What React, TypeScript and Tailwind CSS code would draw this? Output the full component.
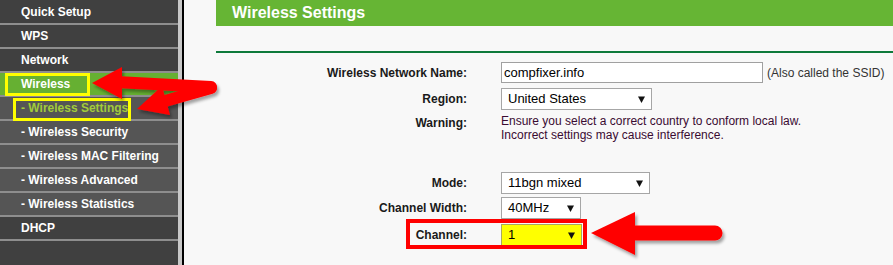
import React from "react";

type MenuItem = { label: string; sub?: boolean; active?: boolean };

const menu: MenuItem[] = [
  { label: "Quick Setup" },
  { label: "WPS" },
  { label: "Network" },
  { label: "Wireless", active: true },
  { label: "- Wireless Settings", sub: true, active: true },
  { label: "- Wireless Security", sub: true },
  { label: "- Wireless MAC Filtering", sub: true },
  { label: "- Wireless Advanced", sub: true },
  { label: "- Wireless Statistics", sub: true },
  { label: "DHCP" },
];

function Triangle() {
  return (
    <svg width="7" height="7" viewBox="0 0 7 7" className="shrink-0">
      <polygon points="0,0.5 7,0.5 3.5,7" fill="#111" />
    </svg>
  );
}

function Select({ value, width, yellow }: { value: string; width: string; yellow?: boolean }) {
  return (
    <div
      className={`flex h-[22px] items-center justify-between border pl-[6px] pr-[6px] text-[13px] text-black ${width} ${
        yellow ? "border-[#a8a860] bg-[#ffff00]" : "border-[#a6a6a6] bg-white"
      }`}
    >
      <span>{value}</span>
      <Triangle />
    </div>
  );
}

function Label({ children }: { children: React.ReactNode }) {
  return <div className="text-right text-[12px] font-bold text-[#1a1a1a]">{children}</div>;
}

export default function App() {
  return (
    <div
      className="relative flex h-[265px] w-[893px] overflow-hidden bg-[#f8f8f8]"
      style={{ fontFamily: '"Liberation Sans", Arial, sans-serif' }}
    >
      {/* sidebar */}
      <div className="flex w-[178px] shrink-0 flex-col bg-[#404040] pt-px">
        {menu.map((m) => (
          <div
            key={m.label}
            className={`h-[24px] border-b-2 border-[#8e8e8e] pl-[21px] text-[12px] font-bold leading-[23px] ${
              m.active && !m.sub ? "bg-[#66b032]" : m.sub ? "bg-[#555555]" : "bg-[#404040]"
            } ${m.active && m.sub ? "text-[#a2cc3a]" : "text-white"}`}
          >
            {m.label}
          </div>
        ))}
      </div>
      <div className="w-[4px] shrink-0 bg-[#c8c8c8]" />
      <div className="w-[2px] shrink-0 bg-black" />

      {/* main */}
      <div className="flex flex-1 flex-col pl-[32px]">
        <div className="flex h-[26px] items-center bg-[#66b534] pl-[16px] text-[16px] font-bold text-white">
          Wireless Settings
        </div>
        <div className="mt-[25px] h-[2px] bg-[#0e7a3b]" />

        <div className="grid grid-cols-[251px_1fr] items-center gap-x-[34px]">
          <div className="col-span-2 h-[9px]" />
          <Label>Wireless Network Name:</Label>
          <div className="flex items-center">
            <div className="flex h-[21px] w-[262px] items-center border border-[#a0a0a0] bg-white pl-[2px] text-[13px] text-black">
              compfixer.info
            </div>
            <span className="ml-[4px] text-[12px] text-[#333]">(Also called the SSID)</span>
          </div>

          <div className="col-span-2 h-[5px]" />
          <Label>Region:</Label>
          <Select value="United States" width="w-[151px]" />

          <div className="col-span-2 h-[4px]" />
          <div className="self-start">
            <Label>Warning:</Label>
          </div>
          <div className="text-[12px] leading-[14px] text-[#3a0b32]">
            Ensure you select a correct country to conform local law.
            <br />
            Incorrect settings may cause interference.
          </div>

          <div className="col-span-2 h-[30px]" />
          <Label>Mode:</Label>
          <Select value="11bgn mixed" width="w-[149px]" />

          <div className="col-span-2 h-[3px]" />
          <Label>Channel Width:</Label>
          <Select value="40MHz" width="w-[80px]" />

          <div className="col-span-2 h-[5px]" />
          <Label>Channel:</Label>
          <Select value="1" width="w-[81px]" yellow />
        </div>
      </div>

      {/* annotations */}
      <div className="pointer-events-none absolute left-[5px] top-[73px] h-[23px] w-[85px] border-[3px] border-[#ffff00]" />
      <div className="pointer-events-none absolute left-[13px] top-[98px] h-[23px] w-[118px] border-[3px] border-[#ffff00]" />
      <div className="pointer-events-none absolute left-[406px] top-[219px] h-[30px] w-[181px] border-4 border-[#ff0000]" />

      <svg className="pointer-events-none absolute left-0 top-0" width="893" height="265">
        <defs>
          <filter id="sh" x="-10%" y="-20%" width="130%" height="160%">
            <feDropShadow dx="2" dy="3" stdDeviation="1.5" floodColor="#000" floodOpacity="0.35" />
          </filter>
        </defs>
        <g filter="url(#sh)" fill="#ff0000" stroke="#ff0000">
          <line x1="211" y1="87" x2="116" y2="82" strokeWidth="12" strokeLinecap="round" />
          <polygon points="92,83 122,67 122,99" stroke="none" />
          <line x1="211" y1="88" x2="158" y2="103" strokeWidth="12" strokeLinecap="round" />
          <polygon points="137,109 162,86 170,115" stroke="none" />
          <line x1="715" y1="233" x2="630" y2="233" strokeWidth="15" strokeLinecap="round" />
          <polygon points="591,233 635,212 635,255" stroke="none" />
        </g>
      </svg>
    </div>
  );
}
